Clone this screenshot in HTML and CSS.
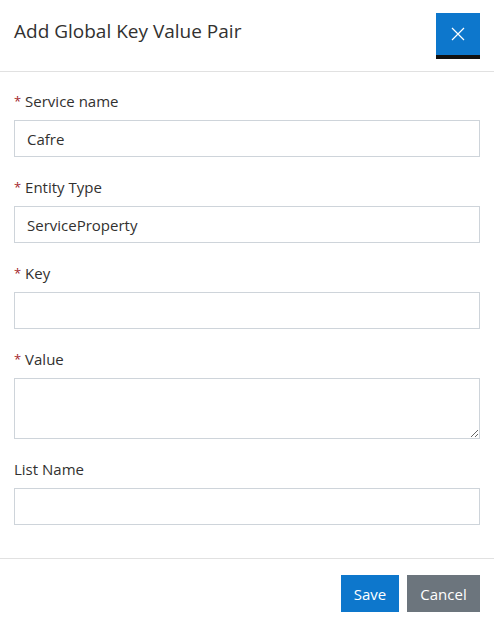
FILE: index.html
```html
<!DOCTYPE html>
<html>
<head>
<meta charset="utf-8">
<link rel="stylesheet" href="styles.css">
</head>
<body>
<div class="modal">
  <div class="modal-header">
    <h1 class="title">Add Global Key Value Pair</h1>
    <button class="close" aria-label="Close">
      <svg width="14" height="14" viewBox="0 0 14 14"><path d="M1 1L13 13M13 1L1 13" stroke="#fff" stroke-width="1.2" fill="none"/></svg>
    </button>
  </div>
  <div class="modal-body">
    <div class="field">
      <label class="label"><span class="req">*</span> Service name</label>
      <input class="input" type="text" value="Cafre">
    </div>
    <div class="field">
      <label class="label"><span class="req">*</span> Entity Type</label>
      <input class="input" type="text" value="ServiceProperty">
    </div>
    <div class="field">
      <label class="label"><span class="req">*</span> Key</label>
      <input class="input" type="text" value="">
    </div>
    <div class="field">
      <label class="label"><span class="req">*</span> Value</label>
      <textarea class="input textarea"></textarea>
    </div>
    <div class="field">
      <label class="label">List Name</label>
      <input class="input" type="text" value="">
    </div>
  </div>
  <div class="modal-footer">
    <button class="btn btn-primary">Save</button>
    <button class="btn btn-secondary">Cancel</button>
  </div>
</div>
</body>
</html>
```

FILE: styles.css
```css
html, body {
  margin: 0;
  padding: 0;
  background: #fff;
}
body {
  font-family: "Open Sans", "Noto Sans", sans-serif;
  color: #323130;
}
.modal {
  width: 494px;
}
.modal-header {
  display: flex;
  align-items: flex-start;
  justify-content: space-between;
  height: 71px;
  border-bottom: 1px solid #e1e1e1;
  padding: 0 14px;
  box-sizing: content-box;
}
.title {
  margin: 0;
  font-size: 19px;
  font-weight: 400;
  line-height: 26px;
  padding-top: 18px;
  color: #323130;
}
.close {
  margin-top: 13px;
  width: 44px;
  height: 46px;
  border: none;
  border-bottom: 4px solid #111;
  background: #0d77cc;
  padding: 0;
  display: flex;
  align-items: center;
  justify-content: center;
  box-sizing: border-box;
}
.modal-body {
  padding: 18px 14px 33px;
  display: flex;
  flex-direction: column;
  gap: 19px;
}
.field {
  display: flex;
  flex-direction: column;
}
.label {
  font-size: 15px;
  line-height: 22px;
  margin-bottom: 8px;
  color: #323130;
}
.req {
  color: #a4262c;
  font-size: 13px;
  vertical-align: 1px;
}
.input {
  box-sizing: border-box;
  width: 100%;
  height: 37px;
  border: 1px solid #ced4da;
  border-radius: 0;
  padding: 0 12px;
  font-family: inherit;
  font-size: 15px;
  color: #323130;
  outline: none;
  margin: 0;
}
.textarea {
  height: 61px;
  padding: 6px 12px;
  resize: vertical;
  display: block;
}
.modal-footer {
  border-top: 1px solid #e1e1e1;
  padding: 16px 14px 14px;
  display: flex;
  justify-content: flex-end;
  gap: 8px;
}
.btn {
  height: 37px;
  border: none;
  border-radius: 0;
  font-family: inherit;
  font-size: 15px;
  color: #fff;
  padding: 0;
}
.btn-primary {
  background: #0d77cc;
  width: 58px;
}
.btn-secondary {
  background: #6c757d;
  width: 73px;
}
```
